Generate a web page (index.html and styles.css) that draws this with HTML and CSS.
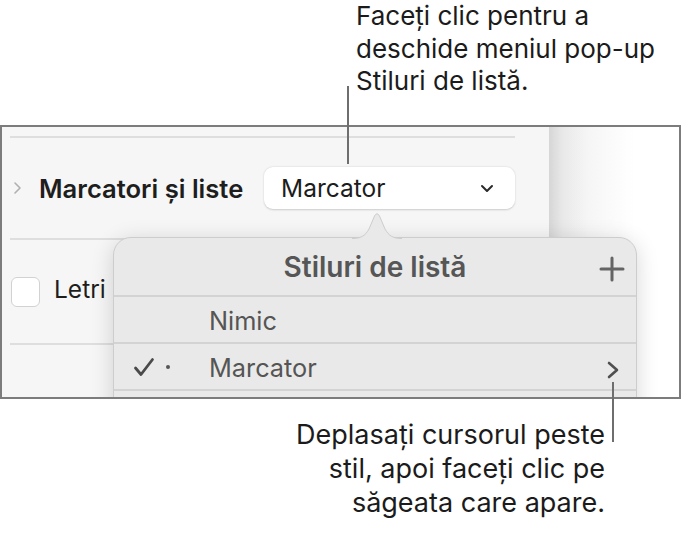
FILE: index.html
```html
<!DOCTYPE html>
<html lang="ro">
<head>
<meta charset="utf-8">
<link rel="stylesheet" href="styles.css">
</head>
<body>
<div class="page">
  <div class="callout-top">Faceți clic pentru a<br>deschide meniul pop-up<br>Stiluri de listă.</div>

  <div class="frame">
    <div class="sidebar">
      <div class="sep"></div>
      <div class="row">
        <svg class="disclosure" width="9" height="14" viewBox="0 0 9 14"><path d="M2 2 L7 7 L2 12" fill="none" stroke="#b0b0b0" stroke-width="1.6" stroke-linecap="round" stroke-linejoin="round"/></svg>
        <span class="row-title">Marcatori și liste</span>
        <div class="popup-btn">
          <span>Marcator</span>
          <svg width="14" height="9" viewBox="0 0 14 9"><path d="M2 2 L7 7 L12 2" fill="none" stroke="#2a2a2a" stroke-width="2" stroke-linecap="round" stroke-linejoin="round"/></svg>
        </div>
      </div>
      <div class="sep"></div>
      <div class="row row2">
        <span class="checkbox"></span>
        <span class="row-label">Letri</span>
      </div>
      <div class="sep"></div>
    </div>
    <div class="canvas"></div>

    <div class="popover">
      <svg class="arrow" width="50" height="27" viewBox="0 0 50 27"><path d="M0 26.5 C9 26.5 13 24 17 17 L22.5 4 Q25 -0.5 27.5 4 L33 17 C37 24 41 26.5 50 26.5" fill="#e9e9e9" stroke="#cdcdcd" stroke-width="1"/></svg>
      <div class="pop-head">
        <span class="pop-title">Stiluri de listă</span>
        <svg class="plus" width="26" height="26" viewBox="0 0 26 26"><path d="M13 2 V24 M2 13 H24" stroke="#646464" stroke-width="3" stroke-linecap="round"/></svg>
      </div>
      <div class="pop-item"><span class="mark"></span><span class="item-text">Nimic</span></div>
      <div class="pop-item">
        <span class="mark">
          <svg width="22" height="20" viewBox="0 0 22 20"><path d="M2.5 11 L8 17.5 L19.5 2.5" fill="none" stroke="#4a4a4a" stroke-width="2.8" stroke-linecap="round" stroke-linejoin="round"/></svg>
          <span class="dot"></span>
        </span>
        <span class="item-text">Marcator</span>
        <svg class="more" width="14" height="20" viewBox="0 0 14 20"><path d="M3 3 L11 10 L3 17" fill="none" stroke="#4f4f4f" stroke-width="2.6" stroke-linecap="round" stroke-linejoin="round"/></svg>
      </div>
      <div class="pop-item"></div>
    </div>
  </div>

  <div class="callout-bottom">Deplasați cursorul peste<br>stil, apoi faceți clic pe<br>săgeata care apare.</div>

  <span class="leader leader-top"></span>
  <span class="leader leader-bottom"></span>
</div>
</body>
</html>
```

FILE: styles.css
```css
* { box-sizing: border-box; }
html, body { margin: 0; padding: 0; background: #fff; }
body { font-family: Inter, "Noto Sans", "Liberation Sans", sans-serif; }

.page {
  position: relative;
  width: 681px;
  height: 537px;
  overflow: hidden;
}

.callout-top {
  height: 125px;
  padding: 0 0 0 356px;
  font-size: 26px;
  line-height: 32.5px;
  color: #1b1b1b;
  white-space: nowrap;
}

.frame {
  position: relative;
  height: 274px;
  border: 2px solid #7c7c7c;
  display: flex;
  overflow: hidden;
}

.sidebar {
  width: 547px;
  background: #f6f6f6;
  padding: 9px 34px 0 8px;
}

.sep {
  height: 2px;
  background: #dedede;
}

.row {
  height: 100px;
  display: flex;
  align-items: center;
}

.disclosure { margin-left: 3px; }

.row-title {
  margin-left: 17px;
  font-size: 25.6px;
  font-weight: 600;
  color: #1e1e1e;
  white-space: nowrap;
}

.popup-btn {
  margin-left: auto;
  flex: none;
  width: 251px;
  height: 42px;
  background: #fff;
  border-radius: 9px;
  box-shadow: 0 0.5px 2px rgba(0,0,0,0.18);
  display: flex;
  align-items: center;
  justify-content: space-between;
  padding: 0 21px 0 17px;
  font-size: 24.5px;
  color: #1c1c1c;
}

.row2 { height: 103px; }

.checkbox {
  width: 29px;
  height: 30px;
  margin-left: 1px;
  border-radius: 6px;
  background: #fff;
  border: 1px solid #d2d2d2;
}

.row-label {
  margin-left: 14px;
  font-size: 24.5px;
  color: #1e1e1e;
  padding-bottom: 5px;
}

.canvas {
  flex: 1;
  background: linear-gradient(to right, #d6d6d6 0, #e9e9e9 14px, #f6f6f6 40px, #ffffff 85px);
}

.popover {
  position: absolute;
  left: 111px;
  top: 110px;
  width: 524px;
  height: 220px;
  background: #e9e9e9;
  border: 1px solid #cdcdcd;
  border-radius: 18px 18px 0 0;
  box-shadow: 0 4px 22px rgba(0,0,0,0.16);
}

.arrow {
  position: absolute;
  left: 238px;
  top: -26px;
}

.pop-head {
  position: relative;
  height: 59px;
  display: flex;
  align-items: center;
  justify-content: center;
  border-bottom: 2px solid #d3d3d3;
}

.pop-title {
  font-size: 28px;
  font-weight: 600;
  color: #565656;
  white-space: nowrap;
}

.plus {
  position: absolute;
  right: 11px;
  top: 18px;
}

.pop-item {
  height: 47px;
  display: flex;
  align-items: center;
  border-bottom: 2px solid #d3d3d3;
  padding-right: 16px;
}
.pop-item + .pop-item + .pop-item { height: 44px; }

.mark {
  width: 95px;
  flex: none;
  display: flex;
  align-items: center;
  padding-left: 19px;
}

.dot {
  width: 4px;
  height: 4px;
  border-radius: 50%;
  background: #555;
  margin-left: 11px;
}

.item-text {
  font-size: 25.3px;
  color: #555;
  padding-top: 2px;
}

.more { margin-left: auto; margin-top: 6px; }

.callout-bottom {
  width: 605px;
  text-align: right;
  padding-top: 19px;
  font-size: 27px;
  line-height: 34px;
  color: #1b1b1b;
  white-space: nowrap;
}

.leader {
  position: absolute;
  width: 2px;
  background: #6e6e6e;
}
.leader-top { left: 347px; top: 86px; height: 78px; }
.leader-bottom { left: 612px; top: 382px; height: 60px; }
```
